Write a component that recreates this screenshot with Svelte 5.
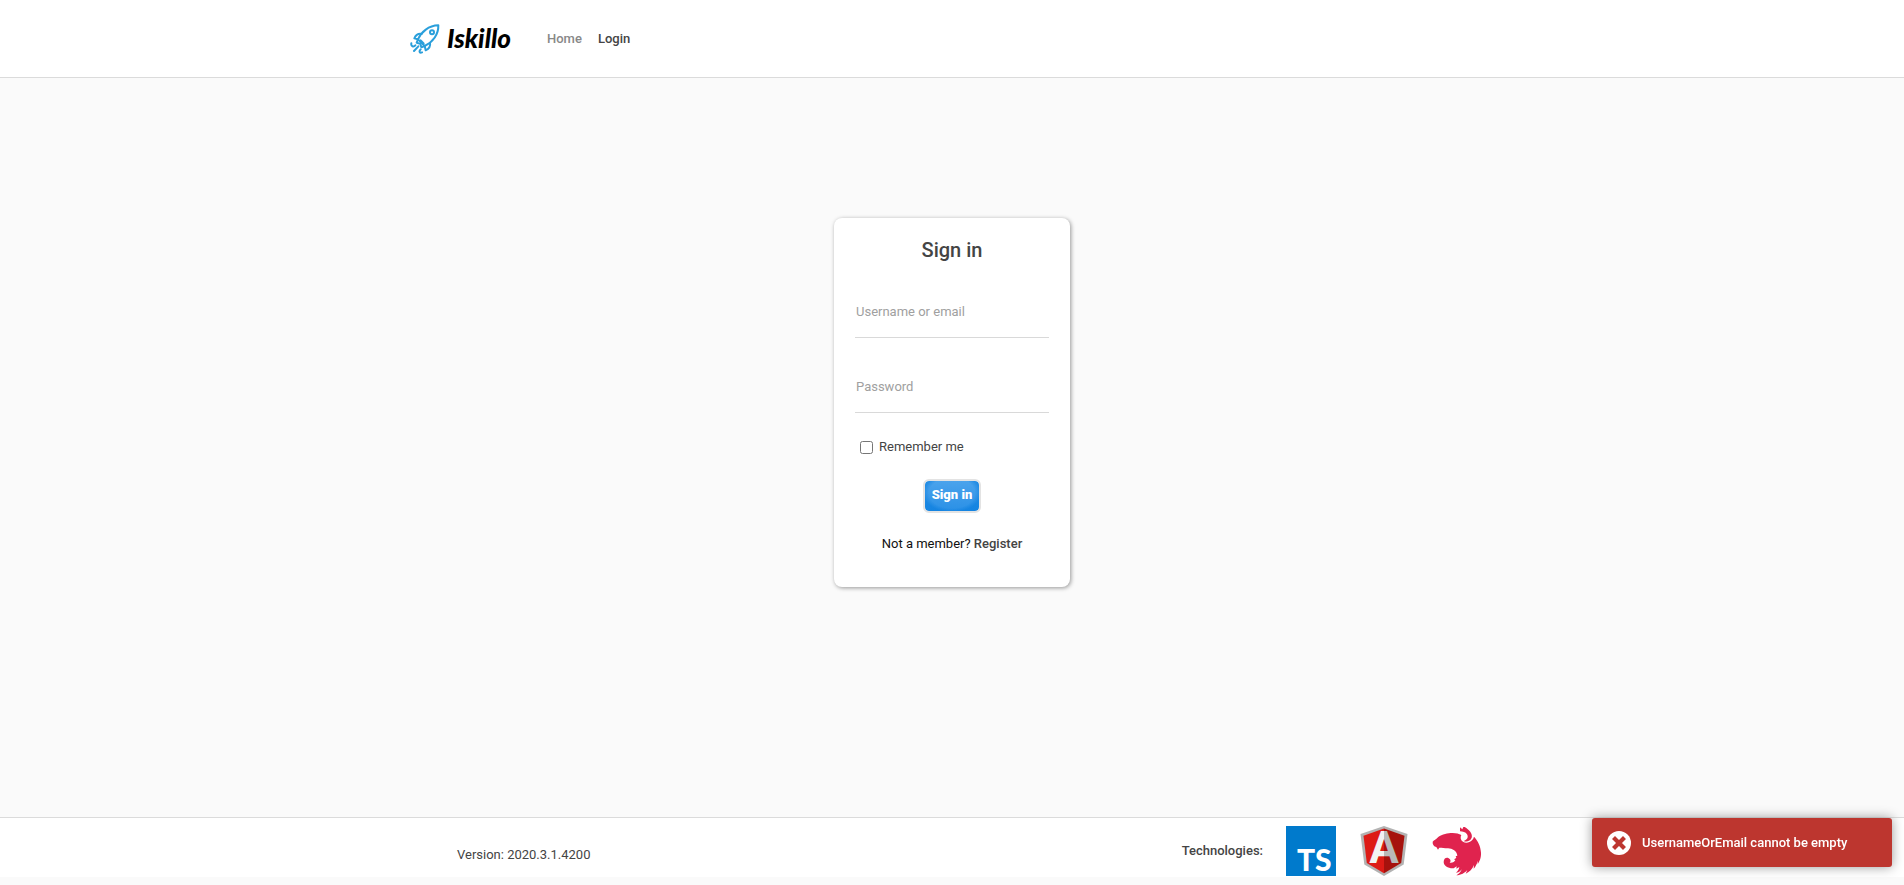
<script>
  let usernameOrEmail = $state('');
  let password = $state('');
  let remember = $state(false);
</script>

<div class="page">
  <header>
    <div class="container bar">
      <a class="brand" href="#home" aria-label="Iskillo">
        <svg class="rocket" viewBox="0 0 90 90" aria-hidden="true">
          <g fill="none" stroke="#2a9fdb" stroke-width="6" stroke-linecap="round" stroke-linejoin="round">
            <path d="M24 46 C34 23 56 5 85 4 C86 31 69 54 44 66 Z" />
            <circle cx="66" cy="25" r="6" />
            <path d="M35 30 C24 28 17 34 13 43 L24 46" />
            <path d="M60 56 C62 67 56 75 47 79 L44 66" />
            <path d="M24 46 L20 56 L31 59 L34 70 L44 66 M32 49 L41 58" />
            <path d="M4 58 C2 67 11 70 16 64 M25 67 L12 81 M32 76 C26 82 29 88 36 85" />
          </g>
        </svg>
        <span class="wordmark">Iskillo</span>
      </a>
      <nav>
        <a class="muted" href="#home">Home</a>
        <a href="#login">Login</a>
      </nav>
    </div>
  </header>

  <main>
    <form class="card" onsubmit={(e) => e.preventDefault()}>
      <h1>Sign in</h1>
      <input class="field" type="text" aria-label="Username or email" placeholder="Username or email" bind:value={usernameOrEmail} />
      <input class="field" type="password" aria-label="Password" placeholder="Password" bind:value={password} />
      <div class="remember">
        <input id="remember" type="checkbox" bind:checked={remember} />
        <label for="remember">Remember me</label>
      </div>
      <button type="submit">Sign in</button>
      <p>Not a member? <a href="#register">Register</a></p>
    </form>
  </main>

  <footer>
    <div class="container foot">
      <span class="version">Version: 2020.3.1.4200</span>
      <div class="tech">
        <span>Technologies:</span>
        <svg viewBox="0 0 50 50" role="img" aria-label="TypeScript">
          <rect width="50" height="50" fill="#007acc" />
          <text x="11" y="45" font-family="Lato, sans-serif" font-weight="900" font-size="30" fill="#fff">TS</text>
        </svg>
        <svg viewBox="0 0 50 50" role="img" aria-label="Angular">
          <defs>
            <linearGradient id="half" gradientUnits="userSpaceOnUse" x1="0" y1="0" x2="50" y2="0">
              <stop offset="0.5" stop-color="#f2f2f2" />
              <stop offset="0.5" stop-color="#b9b9b9" />
            </linearGradient>
          </defs>
          <path fill="#b3b3b3" d="M25 0 L48.500 8 L44.700 38.600 L25 50 L5.300 38.600 L1.500 8 Z" />
          <path fill="#dd1b16" d="M25 2.500 L4.500 9.800 L7.800 37 L25 47.200 Z" />
          <path fill="#a6120d" d="M25 2.500 L45.500 9.800 L42.200 37 L25 47.200 Z" />
          <text x="25" y="37" text-anchor="middle" font-family="Roboto, sans-serif" font-weight="700" font-size="44" fill="url(#half)">A</text>
        </svg>
        <svg viewBox="0 0 150 150" role="img" aria-label="NestJS">
          <g fill="#e0234e">
            <path d="M2 47 C7 42 12 41 15 37 C24 26 42 23 56 21 C71 20 80 23 88 27 C84 34 86 43 93 47 C101 53 113 50 120 43 C123 40 125 36 126 32 C137 43 146 61 147 80 C148 95 142 107 137 114 L138 104 C134 114 131 122 125 128 L126 117 C121 130 111 139 101 143 L106 132 C99 140 87 148 73 148 C82 143 87 137 89 130 C83 138 78 140 72 140 C79 134 81 129 82 123 L73 128 L74 121 L65 127 C48 128 35 119 35 108 C35 98 43 93 50 97 C57 101 57 107 53 110 C61 112 68 107 70 102 L66 100 L73 96 L71 91 L76 89 C75 76 61 67 48 67 C38 66 29 66 22 65 L18 71 L13 63 C6 61 1 56 2 47 Z" />
            <path d="M84 16 L84 4 L91 10 L94 3 L98 3 C111 11 123 23 119 35 C115 45 104 49 95 45 C106 42 110 33 105 25 C101 18 92 17 84 16 Z" />
          </g>
        </svg>
      </div>
    </div>
  </footer>

  <div class="toast" role="alert">
    <svg viewBox="0 0 24 24" aria-hidden="true">
      <circle cx="12" cy="12" r="12" fill="#fff" />
      <path d="M8 8 L16 16 M16 8 L8 16" stroke="#bd362f" stroke-width="4.200" stroke-linecap="square" />
    </svg>
    <span>UsernameOrEmail cannot be empty</span>
  </div>
</div>

<style>
  :global(body) {
    margin: 0;
    background: #fafafa;
  }
  .page {
    display: flex;
    flex-direction: column;
    min-height: 100vh;
    box-sizing: border-box;
    padding-bottom: 8px;
    font: 400 13px/20px Roboto, sans-serif;
    color: #444;
  }
  .page * {
    box-sizing: border-box;
  }
  a {
    color: #444;
    text-decoration: none;
    font-weight: 500;
  }
  .container {
    max-width: 1140px;
    width: 100%;
    margin: 0 auto;
    display: flex;
    align-items: center;
  }
  header {
    display: flex;
    background: #fff;
    border-bottom: 1px solid #dbdbdb;
  }
  .bar {
    padding: 19px 28px;
    gap: 36px;
  }
  .brand {
    display: flex;
    align-items: center;
    gap: 7px;
    height: 39px;
  }
  .rocket {
    width: 30px;
    height: 30px;
  }
  .wordmark {
    font: italic 900 26px/39px Lato, sans-serif;
    color: #000;
  }
  nav {
    display: flex;
    gap: 16px;
  }
  .muted {
    color: #888;
  }
  main {
    flex: 1;
    padding: 140px 16px 32px;
  }
  .card {
    display: flex;
    flex-direction: column;
    align-items: center;
    width: 236px;
    margin: 0 auto;
    padding: 20px 21px 33px;
    background: #fff;
    border-radius: 8px;
    box-shadow: 1px 1px 4px rgba(0, 0, 0, 0.4);
  }
  h1 {
    margin: 0 0 28px;
    font: 500 20px/24px Roboto, sans-serif;
  }
  .field {
    width: 100%;
    height: 48px;
    margin-bottom: 27px;
    padding: 0 1px 4px;
    border: 0;
    border-bottom: 1px solid #d9d9d9;
    background: none;
    color: #444;
    font: inherit;
    outline: none;
  }
  .field::placeholder {
    color: #a0a0a0;
  }
  .remember {
    display: flex;
    align-items: center;
    align-self: flex-start;
    gap: 6px;
    margin: -3px 0 22px;
    padding-left: 5px;
  }
  .remember input {
    width: 13px;
    height: 13px;
    margin: 0;
  }
  button {
    height: 34px;
    margin-bottom: 21px;
    padding: 0 7px 2px;
    border: 2px solid #e3e3e3;
    border-radius: 6px;
    background: radial-gradient(ellipse at 50% 40%, transparent 60%, rgba(0, 120, 220, 0.5) 75%) padding-box, linear-gradient(#4ba3ec, #2a90e6) padding-box;
    color: #fff;
    font: 900 13px/20px Roboto, sans-serif;
  }
  p {
    margin: 0;
    color: #111;
  }
  footer {
    background: #fff;
    border-top: 1px solid #dbdbdb;
  }
  .foot {
    justify-content: space-between;
    padding: 8px 40px 1px 75px;
  }
  .version {
    padding-top: 8px;
  }
  .tech {
    display: flex;
    align-items: center;
    gap: 23px;
    font-weight: 500;
  }
  .tech svg {
    width: 50px;
    height: 50px;
    overflow: visible;
  }
  .toast {
    position: fixed;
    right: 12px;
    bottom: 18px;
    display: flex;
    align-items: center;
    gap: 11px;
    width: 300px;
    height: 49px;
    padding: 0 15px;
    border-radius: 3px;
    background: #bd362f;
    color: #fff;
    box-shadow: 0 0 12px #999;
    font-weight: 500;
  }
  .toast svg {
    width: 24px;
    height: 24px;
  }
</style>
